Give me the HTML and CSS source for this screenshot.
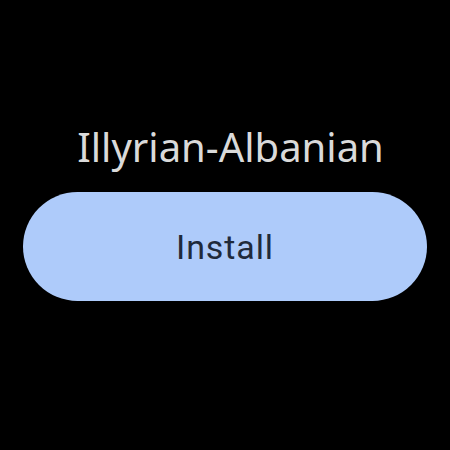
FILE: index.html
```html
<!DOCTYPE html>
<html>
<head>
<meta charset="utf-8">
<link rel="stylesheet" href="styles.css">
</head>
<body>
<main class="screen">
  <h1 class="title">Illyrian-Albanian</h1>
  <button class="install">Install</button>
</main>
</body>
</html>
```

FILE: styles.css
```css
html, body {
  margin: 0;
  padding: 0;
  background: #000;
}
.screen {
  width: 450px;
  height: 450px;
  display: flex;
  flex-direction: column;
  align-items: center;
  box-sizing: border-box;
  padding-top: 121px;
}
.title {
  margin: 0 0 0 11px;
  font-family: "Noto Sans", sans-serif;
  font-weight: 400;
  font-size: 40px;
  line-height: 52px;
  color: #dadada;
}
.install {
  margin-top: 19px;
  width: 404px;
  height: 109px;
  border: none;
  border-radius: 55px;
  background: #aecbfa;
  color: #1f2a3b;
  font-family: Roboto, sans-serif;
  font-size: 34px;
  letter-spacing: 0.9px;
  padding: 0;
}
```
